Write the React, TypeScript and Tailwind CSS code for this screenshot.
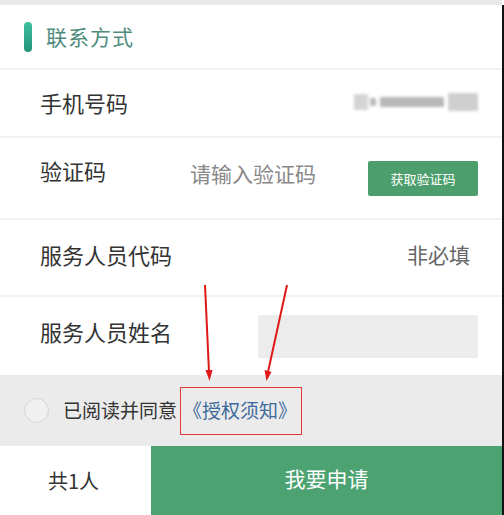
import React from 'react';

const font = { fontFamily: '"Noto Sans CJK SC", "Noto Sans", sans-serif' };

const App = () => {
    return (
        <div className="relative w-[504px] h-[515px] overflow-hidden bg-white" style={font}>
            <div className="flex h-full">
                <div className="flex flex-col flex-1">
                    {/* top strip */}
                    <div className="h-[5px] bg-[#e9e9e9]" />

                    {/* section header */}
                    <div className="h-[65px] flex items-center pl-[24px] border-b-2 border-[#f2f2f2]">
                        <div className="w-[8px] h-[30px] rounded-full bg-gradient-to-b from-[#3cc09c] to-[#23937a]" />
                        <span className="ml-[14px] text-[21px] text-[#4f8c7c] tracking-[1px]">联系方式</span>
                    </div>

                    {/* phone */}
                    <div className="h-[68px] flex items-center justify-between pl-[40px] pr-[24px] pb-[2px] border-b-2 border-[#f2f2f2]">
                        <span className="text-[22px] text-[#333]">手机号码</span>
                        <div className="w-[124px] h-[24px] flex items-center blur-[1.5px]">
                            <div className="w-[14px] h-[16px] bg-[#d4d4d4]" />
                            <div className="w-[6px] h-[8px] bg-[#bbb] ml-[2px]" />
                            <div className="flex-1 h-[10px] bg-[#b8b8b8] mx-[4px]" />
                            <div className="w-[30px] h-[18px] bg-[#cfcfcf]" />
                        </div>
                    </div>

                    {/* code */}
                    <div className="h-[82px] flex items-start pl-[40px] pr-[24px] pt-[16px] border-b-2 border-[#f2f2f2]">
                        <span className="text-[22px] text-[#333] w-[150px]">验证码</span>
                        <span className="text-[21px] text-[#888] mt-[4px] flex-1">请输入验证码</span>
                        <button className="mt-[7px] w-[110px] h-[35px] bg-[#4c9f6c] rounded-[2px] text-white text-[13px]">获取验证码</button>
                    </div>

                    {/* service code */}
                    <div className="h-[77px] flex items-center justify-between pl-[40px] pr-[32px] pb-[6px] border-b-2 border-[#f2f2f2]">
                        <span className="text-[22px] text-[#333]">服务人员代码</span>
                        <span className="text-[21px] text-[#666]">非必填</span>
                    </div>

                    {/* service name */}
                    <div className="h-[78px] flex items-center justify-between pl-[40px] pr-[24px]">
                        <span className="text-[22px] text-[#333] mb-[10px]">服务人员姓名</span>
                        <div className="w-[220px] h-[43px] bg-[#ececec] rounded-[2px]" />
                    </div>

                    {/* agree */}
                    <div className="h-[71px] flex items-center pl-[24px] bg-[#ebebeb]">
                        <div className="w-[25px] h-[25px] rounded-full border border-[#d6d6d6] bg-[#f0f0f0]" />
                        <span className="ml-[14px] text-[19px] text-[#333]">已阅读并同意</span>
                        <span className="ml-[3px] h-[48px] pl-[2px] pr-[4px] flex items-center border-[1.5px] border-[#e03a3a] text-[19px] text-[#3d6a9c]">《授权须知》</span>
                    </div>

                    {/* bottom */}
                    <div className="flex-1 flex">
                        <div className="w-[151px] flex items-center pl-[48px] text-[20px] text-[#333]">共1人</div>
                        <button className="flex-1 bg-[#4ca271] text-white text-[21px] flex items-center justify-center pb-[4px]">我要申请</button>
                    </div>
                </div>
                <div className="w-[2px] mt-[5px] bg-[#111]" />
            </div>

            {/* annotation arrows */}
            <svg className="absolute left-0 top-0 pointer-events-none" width="504" height="515">
                <line x1="205" y1="285" x2="209" y2="372" stroke="#e01818" strokeWidth="2" />
                <path d="M205.5 370 L209.5 381 L212.5 370 Z" fill="#e01818" />
                <line x1="287" y1="285" x2="268" y2="372" stroke="#e01818" strokeWidth="2" />
                <path d="M264.5 370 L266.5 381 L271.5 372 Z" fill="#e01818" />
            </svg>
        </div>
    );
};

export default App;
